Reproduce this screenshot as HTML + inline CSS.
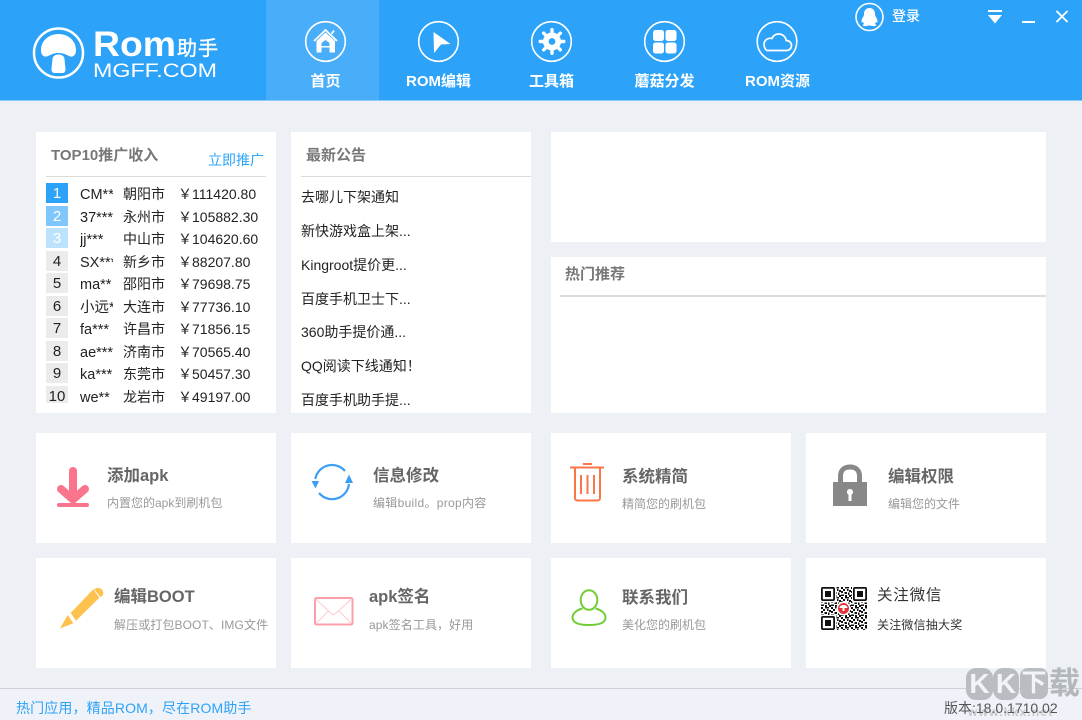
<!DOCTYPE html>
<html lang="zh">
<head>
<meta charset="utf-8">
<title>ROM助手</title>
<style>
html,body{margin:0;padding:0;}
body{width:1082px;height:720px;overflow:hidden;position:relative;background:#edf1f6;font-family:"Liberation Sans","Noto Sans CJK SC",sans-serif;color:#222;}
.a{position:absolute;white-space:nowrap;}
.card{position:absolute;background:#fff;}
.t{position:absolute;white-space:nowrap;line-height:20px;font-size:14px;}
.h{position:absolute;white-space:nowrap;font-size:16.500px;line-height:22px;font-weight:700;color:#666;}
.s{position:absolute;white-space:nowrap;font-size:12px;line-height:18px;color:#999;}
.tab{position:absolute;top:72px;width:113px;text-align:center;color:#fff;font-size:15px;font-weight:700;line-height:20px;}
.n{position:absolute;left:46px;width:22px;height:20px;text-align:center;font-size:15px;line-height:22px;background:#ebebeb;color:#222;overflow:hidden;}
.u{position:absolute;left:80px;width:33px;overflow:hidden;}
svg{position:absolute;overflow:visible;}
</style>
</head>
<body>
<!-- header -->
<div class="a" style="left:0;top:0;width:1082px;height:101px;background:#2ca3f9;"></div>
<div class="a" style="left:266px;top:0;width:113px;height:101px;background:#49aef9;"></div>
<div class="a" style="left:0;top:100px;width:1082px;height:1px;background:#8ccbf8;"></div>

<!-- logo -->
<svg style="left:0;top:0" width="240" height="100" viewBox="0 0 240 100">
  <circle cx="58.500" cy="53" r="24.500" fill="none" stroke="#fff" stroke-width="2.500"/>
  <path d="M41 50c0-9 7.500-16 17.500-16S76 41 76 50c0 5-2.500 7-5.500 6.500-3-.5-5-3.500-12-3.500s-9 3-12 3.500C43.500 57 41 55 41 50z" fill="#fff"/>
  <path d="M52.500 59c0-2.500 2.500-4.500 6-4.500s6 2 6 4.500l1 10c.2 2.200-1 4-3 4h-8c-2 0-3.200-1.800-3-4z" fill="#fff"/>
  <text x="93" y="56" font-family="Liberation Sans" font-size="35" font-weight="700" fill="#fff" textLength="83" lengthAdjust="spacingAndGlyphs">Rom</text>
  <text x="177" y="55" font-family="Noto Sans CJK SC" font-size="20" font-weight="400" fill="#fff" stroke="#fff" stroke-width=".4" textLength="41">助手</text>
  <text x="93" y="77" font-family="Liberation Sans" font-size="19" fill="#fff" textLength="124" lengthAdjust="spacingAndGlyphs">MGFF.COM</text>
</svg>

<!-- nav icons -->
<svg style="left:0;top:0" width="1082" height="100" viewBox="0 0 1082 100">
  <g fill="none" stroke="#fff" stroke-width="1.600">
    <circle cx="325.500" cy="41.500" r="19.800"/>
    <circle cx="438.500" cy="41.500" r="19.800"/>
    <circle cx="551.500" cy="41.500" r="19.800"/>
    <circle cx="664.500" cy="41.500" r="19.800"/>
    <circle cx="777" cy="41.500" r="19.800"/>
    <circle cx="869.500" cy="17" r="13.500"/>
  </g>
  <!-- home -->
  <path d="M314 41l11.500-11 11.500 11" fill="none" stroke="#fff" stroke-width="1.800"/>
  <path d="M331.500 34l2.500-3.500" fill="none" stroke="#fff" stroke-width="1.800"/>
  <path d="M316.500 41l9-8.500 9.500 8.500v11.500h-5.500v-5h-8v5h-5zM321.500 46h8v-3l-4-3-4 3z" fill="#fff" fill-rule="evenodd"/>
  <!-- cursor -->
  <path d="M433.500 32l17 12-9.500 .5-7 8.500z" fill="#fff"/>
  <!-- gear -->
  <g transform="translate(552,41.500)">
    <circle r="9" fill="#fff"/>
    <g stroke="#fff" stroke-width="3.400" stroke-linecap="round">
      <path d="M0-11.800V11.800M-11.800 0H11.800M-8.300-8.300L8.300 8.300M-8.300 8.300L8.300-8.300"/>
    </g>
    <circle r="3.400" fill="#2ca3f9"/>
  </g>
  <!-- grid -->
  <g fill="#fff">
    <rect x="653" y="30" width="11" height="11" rx="2.500"/>
    <rect x="665.500" y="30" width="11" height="11" rx="2.500"/>
    <rect x="653" y="42.500" width="11" height="11" rx="2.500"/>
    <rect x="665.500" y="42.500" width="11" height="11" rx="2.500"/>
  </g>
  <!-- cloud -->
  <path d="M767 50.500h19c3.500 0 5.500-2.400 5.500-5s-2-5-5.300-5c-.7-4-3.700-6.500-7.400-6.500-3.200 0-5.700 1.800-6.900 4.500-.9-.3-1.500-.3-2.300-.2-3.300.3-5.600 3-5.600 6.200 0 3.500 2.400 6 3 6z" fill="none" stroke="#fff" stroke-width="1.700"/>
  <!-- qq -->
  <path d="M869.500 8c3.500 0 5.500 2.700 5.500 6 0 1 .1 1.600.5 2.300 1 1.500 2 3.500 2 5.200 0 1.200-.7 1.300-1.500.4-.3 1-.8 1.700-1.300 2.100 1 .3 1.600.8 1.600 1.300 0 .7-2 1-4 .7-1-.2-1.800-.5-2.800-.5s-1.800.3-2.800.5c-2 .3-4 0-4-.7 0-.5.6-1 1.600-1.300-.5-.4-1-1.100-1.300-2.100-.8.9-1.500.8-1.500-.4 0-1.700 1-3.700 2-5.200.4-.7.5-1.300.5-2.300 0-3.300 2-6 5.500-6z" fill="#fff"/>
  <!-- dropdown, min, close -->
  <rect x="988" y="10" width="14" height="2" fill="#fff"/>
  <path d="M988 15h14l-7 8.500z" fill="#fff"/>
  <rect x="1022" y="21" width="13" height="2" fill="#fff"/>
  <path d="M1056.500 11l11 11M1067.500 11l-11 11" stroke="#fff" stroke-width="1.800" fill="none"/>
</svg>

<div class="tab" style="left:269px;">首页</div>
<div class="tab" style="left:382px;">ROM编辑</div>
<div class="tab" style="left:495px;">工具箱</div>
<div class="tab" style="left:608px;">蘑菇分发</div>
<div class="tab" style="left:721px;">ROM资源</div>
<div class="a" style="left:892px;top:6px;color:#fff;font-size:14px;font-weight:500;line-height:20px;">登录</div>

<!-- cards -->
<div class="card" style="left:36px;top:132px;width:240px;height:281px;"></div>
<div class="card" style="left:291px;top:132px;width:240px;height:281px;"></div>
<div class="card" style="left:551px;top:132px;width:495px;height:110px;"></div>
<div class="card" style="left:551px;top:257px;width:495px;height:156px;"></div>
<div class="card" style="left:36px;top:433px;width:240px;height:110px;"></div>
<div class="card" style="left:291px;top:433px;width:240px;height:110px;"></div>
<div class="card" style="left:551px;top:433px;width:240px;height:110px;"></div>
<div class="card" style="left:806px;top:433px;width:240px;height:110px;"></div>
<div class="card" style="left:36px;top:558px;width:240px;height:110px;"></div>
<div class="card" style="left:291px;top:558px;width:240px;height:110px;"></div>
<div class="card" style="left:551px;top:558px;width:240px;height:110px;"></div>
<div class="card" style="left:806px;top:558px;width:240px;height:110px;"></div>

<!-- top10 -->
<div class="a" style="left:51px;top:146px;font-size:15px;font-weight:700;color:#777;line-height:20px;">TOP10推广收入</div>
<div class="a" style="left:208px;top:150px;font-size:14px;color:#2ca3f9;line-height:20px;">立即推广</div>
<div class="a" style="left:46px;top:176px;width:220px;height:1px;background:#dcdcdc;"></div>

<div class="n" style="top:183px;background:#2ca3f9;color:#fff;">1</div>
<div class="n" style="top:206px;background:#7ec6fb;color:#fff;">2</div>
<div class="n" style="top:228px;background:#bde2fd;color:#fff;">3</div>
<div class="n" style="top:251px;">4</div>
<div class="n" style="top:273px;">5</div>
<div class="n" style="top:296px;">6</div>
<div class="n" style="top:318px;">7</div>
<div class="n" style="top:341px;">8</div>
<div class="n" style="top:363px;">9</div>
<div class="n" style="top:386px;height:17px;">10</div>

<div class="t u" style="top:185px;font-size:14.500px;">CM***</div>
<div class="t u" style="top:208px;font-size:14.500px;">37***</div>
<div class="t u" style="top:230px;font-size:14.500px;">jj***</div>
<div class="t u" style="top:253px;font-size:14.500px;">SX***</div>
<div class="t u" style="top:275px;font-size:14.500px;">ma**</div>
<div class="t u" style="top:298px;font-size:14.500px;">小远**</div>
<div class="t u" style="top:320px;font-size:14.500px;">fa***</div>
<div class="t u" style="top:343px;font-size:14.500px;">ae***</div>
<div class="t u" style="top:365px;font-size:14.500px;">ka***</div>
<div class="t u" style="top:388px;font-size:14.500px;">we**</div>

<div class="t" style="left:123px;top:184px;">朝阳市</div>
<div class="t" style="left:123px;top:207px;">永州市</div>
<div class="t" style="left:123px;top:229px;">中山市</div>
<div class="t" style="left:123px;top:252px;">新乡市</div>
<div class="t" style="left:123px;top:274px;">邵阳市</div>
<div class="t" style="left:123px;top:297px;">大连市</div>
<div class="t" style="left:123px;top:319px;">许昌市</div>
<div class="t" style="left:123px;top:342px;">济南市</div>
<div class="t" style="left:123px;top:364px;">东莞市</div>
<div class="t" style="left:123px;top:387px;">龙岩市</div>

<div class="t" style="left:178px;top:184px;">￥111420.80</div>
<div class="t" style="left:178px;top:207px;">￥105882.30</div>
<div class="t" style="left:178px;top:229px;">￥104620.60</div>
<div class="t" style="left:178px;top:252px;">￥88207.80</div>
<div class="t" style="left:178px;top:274px;">￥79698.75</div>
<div class="t" style="left:178px;top:297px;">￥77736.10</div>
<div class="t" style="left:178px;top:319px;">￥71856.15</div>
<div class="t" style="left:178px;top:342px;">￥70565.40</div>
<div class="t" style="left:178px;top:364px;">￥50457.30</div>
<div class="t" style="left:178px;top:387px;">￥49197.00</div>

<!-- notice -->
<div class="a" style="left:306px;top:146px;font-size:15px;font-weight:700;color:#777;line-height:20px;">最新公告</div>
<div class="a" style="left:301px;top:176px;width:230px;height:1px;background:#dcdcdc;"></div>
<div class="t" style="left:301px;top:187px;">去哪儿下架通知</div>
<div class="t" style="left:301px;top:221px;">新快游戏盒上架...</div>
<div class="t" style="left:301px;top:255px;">Kingroot提价更...</div>
<div class="t" style="left:301px;top:289px;">百度手机卫士下...</div>
<div class="t" style="left:301px;top:322px;">360助手提价通...</div>
<div class="t" style="left:301px;top:356px;">QQ阅读下线通知！</div>
<div class="t" style="left:301px;top:390px;">百度手机助手提...</div>

<!-- hot -->
<div class="a" style="left:565px;top:265px;font-size:15px;font-weight:700;color:#777;line-height:20px;">热门推荐</div>
<div class="a" style="left:560px;top:295px;width:486px;height:2px;background:#dcdcdc;"></div>

<!-- feature text -->
<div class="h" style="left:107px;top:465px;">添加apk</div>
<div class="s" style="left:107px;top:494px;">内置您的apk到刷机包</div>
<div class="h" style="left:373px;top:465px;">信息修改</div>
<div class="s" style="left:373px;top:494px;letter-spacing:.3px;">编辑build。prop内容</div>
<div class="h" style="left:622px;top:466px;">系统精简</div>
<div class="s" style="left:622px;top:495px;">精简您的刷机包</div>
<div class="h" style="left:888px;top:466px;">编辑权限</div>
<div class="s" style="left:888px;top:495px;">编辑您的文件</div>
<div class="h" style="left:114px;top:586px;">编辑BOOT</div>
<div class="s" style="left:114px;top:616px;letter-spacing:.1px;">解压或打包BOOT、IMG文件</div>
<div class="h" style="left:369px;top:586px;">apk签名</div>
<div class="s" style="left:369px;top:616px;letter-spacing:.1px;">apk签名工具，好用</div>
<div class="h" style="left:622px;top:587px;">联系我们</div>
<div class="s" style="left:622px;top:616px;">美化您的刷机包</div>
<div class="a" style="left:877px;top:585px;font-size:15.500px;line-height:22px;color:#333;letter-spacing:.8px;">关注微信</div>
<div class="a" style="left:877px;top:616px;font-size:12px;line-height:18px;color:#333;letter-spacing:.2px;">关注微信抽大奖</div>

<!-- feature icons -->
<svg style="left:0;top:0" width="1082" height="720" viewBox="0 0 1082 720">
  <!-- download -->
  <path d="M73 471v26M61 489l12 10.500L85 489" fill="none" stroke="#f9748c" stroke-width="8" stroke-linecap="round"/>
  <rect x="57" y="503" width="32" height="4" rx="2" fill="#f9748c"/>
  <!-- refresh -->
  <g fill="none" stroke="#3c9ef5" stroke-width="2.200">
    <path d="M315.300 479a17 17 0 0 1 29.700-8"/>
    <path d="M349 484a17 17 0 0 1-30 9"/>
  </g>
  <path d="M311.500 481h7.500l-3.500 7.500zM349 474.500l4 8.500h-8z" fill="#3c9ef5"/>
  <!-- trash -->
  <g fill="none" stroke="#fb7548" stroke-width="2">
    <path d="M570 467.500h34M583 464h9"/>
    <path d="M575 468v30c0 1.500 1 2.500 2.500 2.500h20c1.500 0 2.500-1 2.500-2.500v-30"/>
    <path d="M581 475v19M587.500 475v19M594 475v19"/>
  </g>
  <!-- lock -->
  <path d="M840.500 482v-6c0-6 4-9 9.500-9s9.500 3 9.500 9v6" fill="none" stroke="#888" stroke-width="5"/>
  <path d="M833 482h34v24h-34zM850 489a3 3 0 0 0-1.500 5.600v6.400h3v-6.400A3 3 0 0 0 850 489z" fill="#888" fill-rule="evenodd"/>
  <!-- pencil -->
  <path d="M60 628.500l7.700-13.500 5.600 8.300z" fill="#fdc24d"/>
  <path d="M70.700 613l22.600-23.700 6 8.400-23.300 23z" fill="#fdc24d"/>
  <path d="M95.500 588.500c2.500-1.200 5-.6 6.500 1.200 1.700 2 1.700 4.500 0 6.300l-1.300 1.300-6.700-8z" fill="#fdc24d"/>
  <!-- mail -->
  <rect x="315" y="598" width="37.500" height="26.500" rx="1.500" fill="none" stroke="#fd9fab" stroke-width="2"/>
  <path d="M316 599l15 14.500c1.500 1.500 3 1.500 4.500 0L351.500 599M316 623.500l12.500-12.500M351.500 623.500L339 611" fill="none" stroke="#fdd0d6" stroke-width="1.200"/>
  <!-- person -->
  <g fill="none" stroke="#71cd33" stroke-width="2">
    <ellipse cx="589" cy="600" rx="8.300" ry="9.800"/>
    <path d="M582.500 608.500c-6 1.500-10 5-10 9 0 5 5.500 7.500 16.500 7.500s16.500-2.500 16.500-7.500c0-4-4-7.500-10-9"/>
  </g>
  <!-- QR -->
  <defs>
    <pattern id="q" width="10" height="10" patternUnits="userSpaceOnUse" patternTransform="translate(821 587)">
      <path d="M0 0h2v2H0zM4 0h4v1.500H4zM2 2h2v2H2zM6 2h1.500v2H6zM8 3h2v2H8zM0 4h2v2H0zM3.500 5H6v2H3.500zM7 5.500h1.500V8H7zM0 7.500h3V9H0zM4 8h2v2H4zM8 8h2v2H8z" fill="#111"/>
    </pattern>
  </defs>
  <rect x="821" y="587" width="46" height="43" fill="url(#q)"/>
  <g fill="#fff"><rect x="820.500" y="586.500" width="16" height="16"/><rect x="852" y="586.500" width="16" height="16"/><rect x="820.500" y="615" width="16" height="16"/></g>
  <g fill="none" stroke="#111" stroke-width="1.800">
    <rect x="821.900" y="587.900" width="12.200" height="12.200" rx="1"/>
    <rect x="853.900" y="587.900" width="12.200" height="12.200" rx="1"/>
    <rect x="821.900" y="616.900" width="12.200" height="12.200" rx="1"/>
  </g>
  <g fill="#111"><rect x="825" y="591" width="6" height="6"/><rect x="857" y="591" width="6" height="6"/><rect x="825" y="620" width="6" height="6"/></g>
  <circle cx="843.500" cy="608.500" r="7" fill="#fff"/>
  <circle cx="843.500" cy="608.500" r="5.500" fill="#e6333b"/>
  <path d="M839.500 608c0-2 2-3 4-3s4 1 4 3zM842.500 608h2v3h-2z" fill="#fff"/>
</svg>

<!-- footer -->
<div class="a" style="left:0;top:688px;width:1082px;height:1px;background:#cfd0d4;"></div>
<div class="a" style="left:0;top:689px;width:1082px;height:31px;background:#eff2f8;"></div>

<!-- watermark -->
<div class="a" style="left:966px;top:668px;width:27px;height:32px;border-radius:10px;background:#b9bdc1;color:#f2f4f7;font-size:28px;line-height:32px;font-weight:700;text-align:center;">K</div>
<div class="a" style="left:993px;top:668px;width:26px;height:32px;border-radius:10px;background:#b9bdc1;color:#f2f4f7;font-size:28px;line-height:32px;font-weight:700;text-align:center;">K</div>
<div class="a" style="left:1020px;top:668px;width:28px;height:31px;border-radius:8px;background:#b9bdc1;color:#f2f4f7;font-size:25px;line-height:30px;font-weight:700;text-align:center;">下</div>
<div class="a" style="left:1049px;top:668px;font-size:31px;line-height:32px;font-weight:700;color:#b4b8bc;">载</div>
<div class="a" style="left:968px;top:704px;font-size:12px;line-height:16px;font-weight:700;color:#c6c8cc;letter-spacing:1.200px;">www.kkx.net</div>

<div class="a" style="left:16px;top:698px;font-size:14px;line-height:20px;color:#2ca3f9;letter-spacing:.12px;">热门应用，精品ROM，尽在ROM助手</div>
<div class="a" style="left:944px;top:698px;font-size:14px;line-height:20px;color:#555;">版本:18.0.1710.02</div>
</body>
</html>
